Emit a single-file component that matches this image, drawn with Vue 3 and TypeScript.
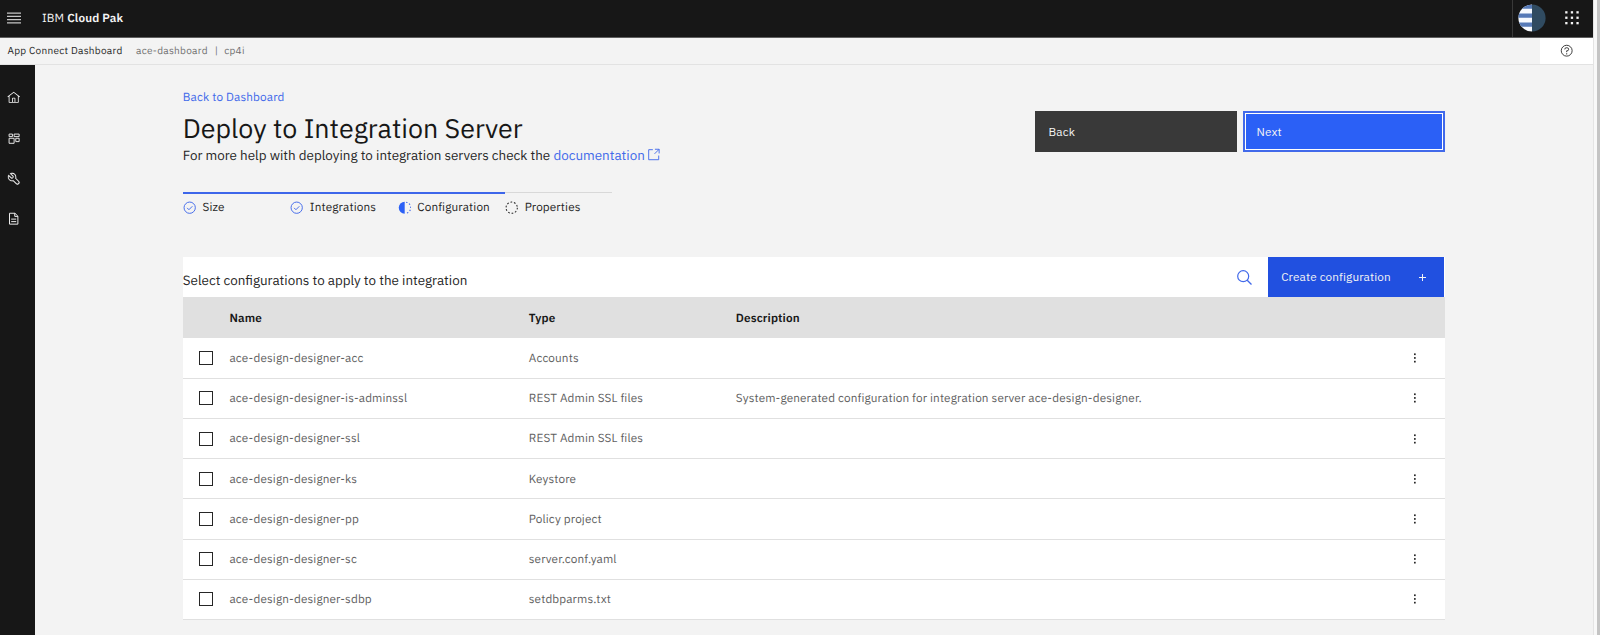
<script setup lang="ts">
interface Step { label: string; state: 'complete' | 'current' | 'incomplete' }
interface Configuration { name: string; type: string; description?: string }

const steps: Step[] = [
  { label: 'Size', state: 'complete' },
  { label: 'Integrations', state: 'complete' },
  { label: 'Configuration', state: 'current' },
  { label: 'Properties', state: 'incomplete' },
]

const configurations: Configuration[] = [
  { name: 'ace-design-designer-acc', type: 'Accounts' },
  {
    name: 'ace-design-designer-is-adminssl',
    type: 'REST Admin SSL files',
    description: 'System-generated configuration for integration server ace-design-designer.',
  },
  { name: 'ace-design-designer-ssl', type: 'REST Admin SSL files' },
  { name: 'ace-design-designer-ks', type: 'Keystore' },
  { name: 'ace-design-designer-pp', type: 'Policy project' },
  { name: 'ace-design-designer-sc', type: 'server.conf.yaml' },
  { name: 'ace-design-designer-sdbp', type: 'setdbparms.txt' },
]
</script>

<template>
  <div class="window">
    <div class="app">
      <header class="header">
        <button class="menu" aria-label="Menu">
          <svg viewBox="0 0 14 12" width="14" height="12"><path d="M0 1.2h14M0 4.4h14M0 7.6h14M0 10.8h14" stroke="#c6c6c6" stroke-width="1.3" /></svg>
        </button>
        <span class="brand">IBM <b>Cloud Pak</b></span>
        <div class="header-tools">
          <svg class="avatar" viewBox="0 0 28 28" width="28" height="28">
            <defs><clipPath id="avatar-clip"><circle cx="14" cy="14" r="13.6" /></clipPath></defs>
            <g clip-path="url(#avatar-clip)">
              <rect width="14" height="28" fill="#f7faff" />
              <path d="M0 2.7h14M0 11.7h14M0 20.7h14" stroke="#567ab8" stroke-width="4.2" />
              <rect x="14" width="14" height="28" fill="#304b61" />
            </g>
          </svg>
          <svg class="switcher" viewBox="0 0 14 14" width="14" height="14" fill="#f4f4f4">
            <template v-for="r in 3" :key="r">
              <rect v-for="c in 3" :key="c" :x="(c - 1) * 5.6 + 0.2" :y="(r - 1) * 5.4 + 0.2" width="2.3" height="2.3" />
            </template>
          </svg>
        </div>
      </header>

      <div class="subheader">
        <span class="product">App Connect Dashboard</span>
        <span class="instance">ace-dashboard</span>
        <span class="pipe">|</span>
        <span class="namespace">cp4i</span>
        <button class="help" aria-label="Help">
          <svg viewBox="0 0 32 32" width="13.4" height="13.4">
            <circle cx="16" cy="16" r="13" fill="none" stroke="#262626" stroke-width="2.1" />
            <path d="M11.5 13v-.5A3.500 3.500 0 0 1 15 9h2a3.500 3.500 0 0 1 0 7.200h-1V19.500" fill="none" stroke="#262626" stroke-width="2.1" />
            <circle cx="16" cy="23.500" r="1.600" fill="#262626" />
          </svg>
        </button>
      </div>

      <div class="body">
        <nav class="rail">
          <svg viewBox="0 0 32 32" class="rail-icon"><path fill="#f4f4f4" d="M16.6123,2.2138a1.01,1.01,0,0,0-1.2427,0L1,13.4194l1.2427,1.5717L4,13.6208V26a2.0041,2.0041,0,0,0,2,2H26a2.0037,2.0037,0,0,0,2-2V13.63L29.7573,15,31,13.4282ZM18,26H14V18h4Zm2,0V18a2.0023,2.0023,0,0,0-2-2H14a2.002,2.002,0,0,0-2,2v8H6V12.0615l10-7.79,10,7.8005V26Z" /></svg>
          <svg viewBox="0 0 32 32" class="rail-icon"><path fill="none" stroke="#f4f4f4" stroke-width="2.200" d="M5 5h8v6H5zM17 5h12v6H17zM5 15h12v12H5zM21 15h8v8H21z" /></svg>
          <svg viewBox="0 0 32 32" class="rail-icon"><path fill="#f4f4f4" stroke="#f4f4f4" stroke-width=".3" d="M12.1 2a9.800 9.800 0 0 0-5.400 1.600l6.400 6.400a2.100 2.100 0 0 1 .2 3 2.100 2.100 0 0 1-3-.2L3.700 6.400A9.840 9.840 0 0 0 2 12.100a10.140 10.140 0 0 0 10.100 10.100 10.900 10.900 0 0 0 2.600-.3l6.700 6.700a5 5 0 0 0 7.100-7.100l-6.700-6.700a10.900 10.900 0 0 0 .3-2.600A10 10 0 0 0 12.100 2zm8 10.100a7.610 7.610 0 0 1-.3 2.100l-.3 1.100.8.800 6.700 6.700a2.880 2.880 0 0 1 .9 2.100A2.720 2.720 0 0 1 27 27a2.900 2.900 0 0 1-4.200 0l-6.700-6.700-.8-.8-1.100.3a7.610 7.610 0 0 1-2.100.3 8.270 8.270 0 0 1-5.700-2.300A7.630 7.630 0 0 1 4 12.100a8.330 8.330 0 0 1 .3-2.200l4.400 4.400a4.140 4.140 0 0 0 5.900.2 4.140 4.140 0 0 0-.2-5.900L10 4.200a6.450 6.450 0 0 1 2-.3 8.270 8.270 0 0 1 5.700 2.300 8.490 8.490 0 0 1 2.400 5.900z" /></svg>
          <svg viewBox="0 0 32 32" class="rail-icon"><path fill="none" stroke="#f4f4f4" stroke-width="2.300" d="M6 3h13l7 7v19H6zM18.500 3v7.500H26M10 17h12M10 23h12" /></svg>
        </nav>

        <main class="content">
          <section class="title-row">
            <div>
              <a class="back-link">Back to Dashboard</a>
              <h1>Deploy to Integration Server</h1>
              <p class="hint">
                For more help with deploying to integration servers check the
                <a>documentation<svg viewBox="0 0 32 32" width="13.400" height="13.400"><path d="M14 4H4v24h24V18M19 3h10v10M29 3L18 14" fill="none" stroke="#4169ea" stroke-width="2.200" /></svg></a>
              </p>
            </div>
            <div class="actions">
              <button class="btn secondary">Back</button>
              <button class="btn primary">Next</button>
            </div>
          </section>

          <ol class="steps">
            <li v-for="step in steps" :key="step.label" :class="step.state">
              <svg viewBox="0 0 14 14" width="13.400" height="13.400">
                <template v-if="step.state === 'complete'">
                  <circle cx="7" cy="7" r="5.900" fill="none" stroke="#4169ea" stroke-width="1" />
                  <path d="M4.300 7.200l1.900 1.900 3.600-3.600" fill="none" stroke="#4169ea" stroke-width="1" />
                </template>
                <template v-else-if="step.state === 'current'">
                  <path d="M7 .8a6.200 6.200 0 0 0 0 12.400z" fill="#2b60f6" />
                  <path d="M8.500 1.200a5.900 5.900 0 0 1 0 11.600" fill="none" stroke="#4169ea" stroke-width="1.100" stroke-dasharray="1.500 1.900" />
                </template>
                <circle v-else cx="7" cy="7" r="5.900" fill="none" stroke="#262626" stroke-width="1.100" stroke-dasharray="1.800 1.890" />
              </svg>
              <span>{{ step.label }}</span>
            </li>
          </ol>

          <section class="table">
            <div class="toolbar">
              <h2>Select configurations to apply to the integration</h2>
              <button class="search" aria-label="Search">
                <svg viewBox="0 0 15 15" width="15" height="15"><circle cx="6.200" cy="6.200" r="5.500" fill="none" stroke="#4169ea" stroke-width="1.200" /><path d="M10.200 10.200l4.300 4.300" stroke="#4169ea" stroke-width="1.300" /></svg>
              </button>
              <button class="create">
                Create configuration
                <svg viewBox="0 0 8 8" width="7" height="7"><path d="M4 0v8M0 4h8" stroke="#f4f4f4" stroke-width="1.150" /></svg>
              </button>
            </div>
            <div class="row head">
              <span></span><span>Name</span><span>Type</span><span>Description</span><span></span>
            </div>
            <div v-for="item in configurations" :key="item.name" class="row">
              <i class="checkbox" role="checkbox" aria-checked="false"></i>
              <span>{{ item.name }}</span>
              <span>{{ item.type }}</span>
              <span>{{ item.description }}</span>
              <svg class="overflow" viewBox="0 0 2 10" width="2" height="10" fill="#262626"><rect width="1.700" height="1.700" y=".4" /><rect width="1.700" height="1.700" y="4.100" /><rect width="1.700" height="1.700" y="7.800" /></svg>
            </div>
          </section>
        </main>
      </div>
    </div>
    <div class="scrollbar"></div>
  </div>
</template>

<style>
html, body { overflow: hidden; background: #f3f3f3; }
</style>

<style scoped>
* { box-sizing: border-box; }
.window {
  display: flex;
  height: 635px;
  overflow: hidden;
  background: #f3f3f3;
  color: #262626;
  font: 400 11.74px/16px "IBM Plex Sans", Roboto, sans-serif;
  letter-spacing: 0.134px;
  text-rendering: geometricPrecision;
}
button { margin: 0; padding: 0; border: 0; background: none; font: inherit; letter-spacing: inherit; text-align: left; }
svg { display: block; flex: none; }
.app { width: 1592.5px; display: flex; flex-direction: column; }
.scrollbar { flex: 1; border-left: 1px solid #e4e4e4; background: linear-gradient(90deg, #f8f8f8 2.500px, #c4c4c4 3.500px); }

.header { height: 38px; flex: none; display: flex; align-items: center; background: #171717; border-bottom: 1px solid #5f5f5f; color: #f4f4f4; }
.menu { width: 42px; padding-left: 7.300px; }
.menu svg { margin-bottom: 1.500px; }
.brand { letter-spacing: 0.134px; white-space: pre; padding-top: 0.500px; }
.brand b { font-weight: 600; }
.header-tools { display: flex; align-items: center; height: 100%; width: 80.500px; margin-left: auto; border-left: 1px solid #393939; padding-left: 5px; }
.avatar { margin-bottom: 2px; }
.switcher { margin-left: 19px; margin-bottom: 2px; overflow: visible; }

.subheader { height: 27px; flex: none; display: flex; align-items: center; padding-left: 7.500px; border-bottom: 1px solid #e2e2e2; font-size: 10.070px; letter-spacing: 0.268px; }
.subheader span { padding-bottom: 0.500px; }
.instance, .pipe, .namespace { color: #6f6f6f; }
.instance { margin-left: 13.500px; }
.pipe { margin-left: 7px; }
.namespace { margin-left: 6px; }
.help { width: 52.500px; height: 26px; margin-left: auto; padding-left: 20px; background: #fff; }

.body { flex: 1; display: flex; min-height: 0; }
.rail { width: 34.600px; background: #171717; padding: 26.300px 0 0 7.400px; display: flex; flex-direction: column; gap: 26.850px; }
.rail-icon { width: 13.400px; height: 13.400px; }

.content { width: 1262px; margin-left: 148.200px; }
.title-row { display: flex; justify-content: space-between; height: 127px; padding-top: 24.700px; }
a { color: #4169ea; }
.back-link { display: block; line-height: 16px; }
h1 { margin: 6.500px 0 0; font-size: 26.840px; line-height: 34px; font-weight: 400; letter-spacing: 0; color: #171717; }
.hint { margin: 0.200px 0 0; font-size: 13.420px; line-height: 18px; letter-spacing: 0; white-space: nowrap; }
.hint svg { display: inline-block; vertical-align: -1.500px; margin-left: 2.500px; }
.actions { display: flex; gap: 6.500px; padding-top: 21.600px; }
.btn { width: 201.600px; height: 40.300px; padding: 0.400px 0 0 13.400px; color: #f4f4f4; }
.secondary { background: #393939; }
.primary { background: #2b60f6; border: 2px solid #4169ea; box-shadow: inset 0 0 0 1px #fff; padding-left: 11.400px; }

.steps { display: flex; list-style: none; margin: 0; padding: 0; height: 65px; }
.steps li { display: flex; width: 107.400px; height: 24px; padding-top: 6px; gap: 6.300px; border-top: 2px solid #3d66ea; }
.steps li svg { margin-top: 0.900px; }
.steps li.incomplete { border-top: 1px solid #d8d8d8; padding-top: 7px; }

.toolbar { display: flex; align-items: center; height: 40.400px; background: #fff; }
h2 { margin: 5px 0 0; font-size: 13.420px; line-height: 18px; font-weight: 400; letter-spacing: 0; }
.search { width: 30.500px; height: 15px; margin-left: auto; }
.create { width: 176px; height: 40.400px; margin-right: 1px; padding: 0 17.500px 0 13.400px; display: flex; align-items: center; justify-content: space-between; background: #2150e0; color: #f4f4f4; }
.row {
  display: grid;
  grid-template-columns: 46.700px 299.300px 207px 1fr 31px;
  align-items: center;
  height: 40.200px;
  background: #fff;
  border-bottom: 1px solid #e0e0e0;
  color: #5f5f5f;
}
.row span { padding-top: 1.600px; }
.head { height: 40.400px; background: #e0e0e0; color: #171717; font-weight: 600; }
.head span { padding-top: 3px; }
.head + .row { height: 41px; }
.checkbox { width: 14px; height: 14px; margin-left: 16px; border: 1px solid #262626; }
</style>
